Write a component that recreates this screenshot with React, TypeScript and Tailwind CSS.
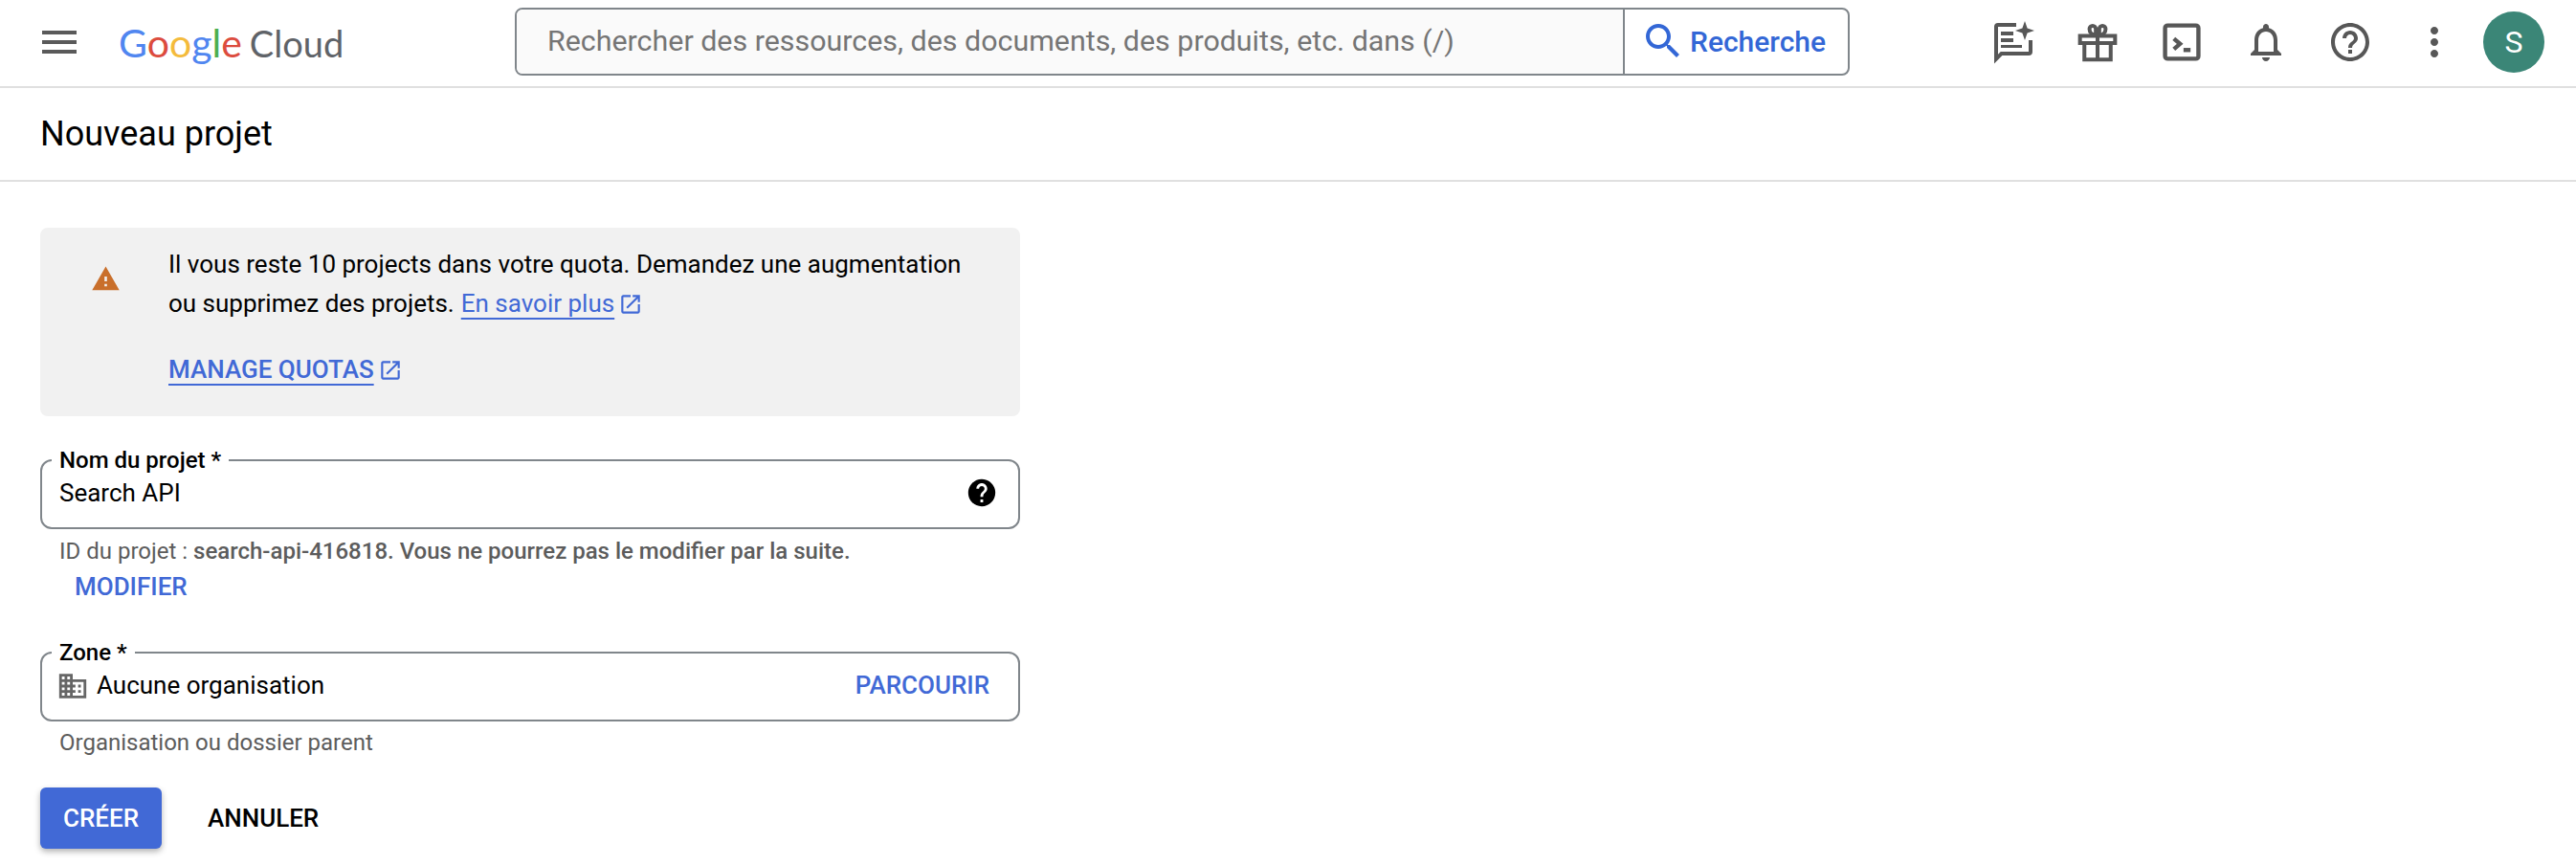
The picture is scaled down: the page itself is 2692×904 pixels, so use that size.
const paths = {
  menu: "M3 18h18v-2H3v2zm0-5h18v-2H3v2zm0-7v2h18V6H3z",
  search:
    "M15.5 14h-.79l-.28-.27C15.41 12.59 16 11.11 16 9.5 16 5.91 13.09 3 9.5 3S3 5.91 3 9.5 5.91 16 9.5 16c1.61 0 3.09-.59 4.23-1.57l.27.28v.79l5 4.99L20.49 19l-4.99-5zm-6 0C7.01 14 5 11.99 5 9.5S7.01 5 9.5 5 14 7.01 14 9.5 11.99 14 9.5 14z",
  bell: "M12 22c1.1 0 2-.9 2-2h-4c0 1.1.9 2 2 2zm6-6v-5c0-3.07-1.63-5.64-4.5-6.32V4c0-.83-.67-1.5-1.5-1.5s-1.5.67-1.5 1.5v.68C7.64 5.36 6 7.92 6 11v5l-2 2v1h16v-1l-2-2zm-2 1H8v-6c0-2.48 1.51-4.5 4-4.5s4 2.02 4 4.5v6z",
  help: "M11 18h2v-2h-2v2zm1-16C6.48 2 2 6.48 2 12s4.48 10 10 10 10-4.48 10-10S17.52 2 12 2zm0 18c-4.41 0-8-3.59-8-8s3.59-8 8-8 8 3.59 8 8-3.59 8-8 8zm0-14c-2.21 0-4 1.79-4 4h2c0-1.1.9-2 2-2s2 .9 2 2c0 2-3 1.75-3 5h2c0-2.25 3-2.5 3-5 0-2.21-1.79-4-4-4z",
  more: "M12 8c1.1 0 2-.9 2-2s-.9-2-2-2-2 .9-2 2 .9 2 2 2zm0 2c-1.1 0-2 .9-2 2s.9 2 2 2 2-.9 2-2-.9-2-2-2zm0 6c-1.1 0-2 .9-2 2s.9 2 2 2 2-.9 2-2-.9-2-2-2z",
  warning: "M1 21h22L12 2 1 21zm12-3h-2v-2h2v2zm0-4h-2v-4h2v4z",
  open: "M19 19H5V5h7V3H5c-1.11 0-2 .9-2 2v14c0 1.1.89 2 2 2h14c1.1 0 2-.9 2-2v-7h-2v7zM14 3v2h3.59l-9.83 9.83 1.41 1.41L19 6.41V10h2V3h-7z",
  helpFilled:
    "M12 2C6.48 2 2 6.48 2 12s4.48 10 10 10 10-4.48 10-10S17.52 2 12 2zm1 17h-2v-2h2v2zm2.07-7.75l-.9.92C13.45 12.9 13 13.5 13 15h-2v-.5c0-1.1.45-2.1 1.17-2.83l1.24-1.26c.37-.36.59-.86.59-1.41 0-1.1-.9-2-2-2s-2 .9-2 2H8c0-2.21 1.79-4 4-4s4 1.79 4 4c0 .88-.36 1.68-.93 2.25z",
  domain:
    "M12 7V3H2v18h20V7H12zM6 19H4v-2h2v2zm0-4H4v-2h2v2zm0-4H4V9h2v2zm0-4H4V5h2v2zm4 12H8v-2h2v2zm0-4H8v-2h2v2zm0-4H8V9h2v2zm0-4H8V5h2v2zm10 12h-8v-2h2v-2h-2v-2h2v-2h-2V9h8v10zm-2-8h-2v2h2v-2zm0 4h-2v2h2v-2z",
};

function Icon({ d, className }: { d: string; className: string }) {
  return (
    <svg viewBox="0 0 24 24" className={className} fill="currentColor">
      <path d={d} />
    </svg>
  );
}

function SparkChat({ className }: { className: string }) {
  return (
    <svg viewBox="0 0 24 24" className={className} fill="currentColor">
      <path d="M2 4a2 2 0 0 1 2-2h9.5v2H4v14.4L5.4 17H20v-6h2v6a2 2 0 0 1-2 2H6.2L2 23.2V4z" />
      <path d="M5.5 6.5H12v2H5.5zM5.5 10H12v2H5.5zM5.5 13.5h11V15h-11z" />
      <path d="M18 1l1.3 3.7L23 6l-3.7 1.3L18 11l-1.3-3.7L13 6l3.7-1.3z" />
    </svg>
  );
}

function Gift({ className }: { className: string }) {
  return (
    <svg viewBox="0 0 24 24" className={className} fill="none" stroke="currentColor" strokeWidth="2.2">
      <path d="M2 8.5h20v4H2zM4.500 12.500V22h15v-9.500M12 8.500V22" />
      <path d="M11 8V4.500a1.800 1.800 0 1 0-3.600 0C7.400 6.500 9 8 11 8zM13 8V4.500a1.800 1.800 0 1 1 3.600 0C16.600 6.500 15 8 13 8z" />
    </svg>
  );
}

function Terminal({ className }: { className: string }) {
  return (
    <svg viewBox="0 0 24 24" className={className} fill="none" stroke="currentColor" strokeWidth="2.4">
      <rect x="2.500" y="2.500" width="19" height="19" rx="1.500" />
      <path d="M7.500 10l3.500 3-3.500 3" />
      <path d="M13 16.500h4" />
    </svg>
  );
}

function Field({ label, children }: { label: string; children: React.ReactNode }) {
  return (
    <fieldset className="w-[1024px] h-[86px] border-2 border-[#80868b] rounded-[12px] pl-[10px] pr-[24px]">
      <legend className="px-2 text-[24px] leading-[28px] font-medium text-black">{label}</legend>
      {children}
    </fieldset>
  );
}

export default function App() {
  return (
    <div className="w-[2692px] h-[904px] overflow-hidden bg-white font-['Roboto',sans-serif] text-black">
      <header className="h-[92px] pb-[2px] border-b-2 border-[#e0e0e0] flex items-center">
        <Icon d={paths.menu} className="w-[48px] h-[48px] ml-[38px] text-[#5a5a5a]" />
        <div className="ml-[38px] w-[233px] font-['Lato',sans-serif] text-[41px] leading-none whitespace-nowrap">
          <span className="text-[#5086f0]">G</span>
          <span className="text-[#dc4c3e]">o</span>
          <span className="text-[#f4bb3c]">o</span>
          <span className="text-[#5086f0]">g</span>
          <span className="text-[#4caf50]">l</span>
          <span className="text-[#dc4c3e]">e</span>
          <span className="text-[#5f6368] text-[38px] ml-[8px]">Cloud</span>
        </div>
        <div className="ml-[181px] mb-[2px] w-[1395px] h-[71px] border-2 border-[#80868b] rounded-[8px] flex items-stretch overflow-hidden">
          <div className="w-[1158px] bg-[#fafafa] flex items-center pl-[32px] text-[30.4px] text-[#757575] border-r-2 border-[#80868b] whitespace-nowrap">
            Rechercher des ressources, des documents, des produits, etc. dans (/)
          </div>
          <div className="flex-1 flex items-center pl-[16px] gap-[4px] text-[#3367d6] text-[30px] font-medium">
            <Icon d={paths.search} className="w-[48px] h-[48px]" />
            Recherche
          </div>
        </div>
        <div className="ml-[127px] flex items-center text-[#575757]">
          <div className="w-[88px] flex justify-center"><SparkChat className="w-[48px] h-[48px]" /></div>
          <div className="w-[88px] flex justify-center"><Gift className="w-[44px] h-[44px]" /></div>
          <div className="w-[88px] flex justify-center"><Terminal className="w-[44px] h-[44px]" /></div>
          <div className="w-[88px] flex justify-center"><Icon d={paths.bell} className="w-[48px] h-[48px]" /></div>
          <div className="w-[88px] flex justify-center"><Icon d={paths.help} className="w-[48px] h-[48px]" /></div>
          <div className="w-[88px] flex justify-center"><Icon d={paths.more} className="w-[48px] h-[48px]" /></div>
          <div className="ml-[7px] w-[64px] h-[64px] rounded-full bg-[#3b8677] text-white text-[32px] flex items-center justify-center">S</div>
        </div>
      </header>

      <div className="h-[98px] border-b-2 border-[#e0e0e0] flex items-center pl-[42px] text-[36px]">Nouveau projet</div>

      <main className="pl-[42px] pt-[48px] w-[1066px] box-content">
        <div className="w-[1024px] h-[197px] rounded-[8px] bg-[#f1f1f1] flex text-[26px]">
          <Icon d={paths.warning} className="w-[31px] h-[31px] ml-[53px] mt-[38px] text-[#c96f2b]" />
          <div className="ml-[50px] pt-[18px]">
            <div className="leading-[41px]">Il vous reste 10 projects dans votre quota. Demandez une augmentation</div>
            <div className="leading-[41px] flex items-center">
              ou supprimez des projets.
              <span className="ml-[7px] underline decoration-2 underline-offset-[6px] text-[#4169d6]">En savoir plus</span>
              <Icon d={paths.open} className="w-[26px] h-[26px] ml-[4px] text-[#4169d6]" />
            </div>
            <div className="mt-[28px] leading-[41px] flex items-center font-medium text-[#4169d6]">
              <span className="underline decoration-2 underline-offset-[6px]">MANAGE QUOTAS</span>
              <Icon d={paths.open} className="w-[26px] h-[26px] ml-[4px]" />
            </div>
          </div>
        </div>

        <div className="mt-[32px]">
          <Field label="Nom du projet *">
            <div className="flex items-center justify-between pl-2 h-[40px] text-[26px]">
              Search API
              <Icon d={paths.helpFilled} className="w-[34px] h-[34px] text-black -mr-[3px]" />
            </div>
          </Field>
          <div className="mt-[8px] pl-[20px] text-[24px] leading-[30px] text-[#5c5c5c]">
            ID du projet : <span className="font-medium">search-api-416818. Vous ne pourrez pas le modifier par la suite.</span>
          </div>
          <div className="mt-[7px] pl-[36px] text-[26px] leading-[30px] font-medium text-[#4169d6]">MODIFIER</div>
        </div>

        <div className="mt-[40px]">
          <Field label="Zone *">
            <div className="flex items-center pl-2 h-[41px] text-[26px]">
              <Icon d={paths.domain} className="w-[34px] h-[34px] -ml-[3px] text-[#666666]" />
              <span className="ml-[8px] flex-1">Aucune organisation</span>
              <span className="font-medium text-[#4169d6] mr-[6px]">PARCOURIR</span>
            </div>
          </Field>
          <div className="mt-[7px] pl-[20px] text-[24px] leading-[30px] text-[#5c5c5c]">Organisation ou dossier parent</div>
        </div>

        <div className="mt-[32px] flex items-center">
          <button className="w-[127px] h-[64px] rounded-[6px] bg-[#4169d6] text-white text-[26px] font-medium shadow-[0_3px_6px_rgba(0,0,0,0.3)]">CRÉER</button>
          <button className="ml-[48px] text-[26px] font-medium">ANNULER</button>
        </div>
      </main>
    </div>
  );
}
